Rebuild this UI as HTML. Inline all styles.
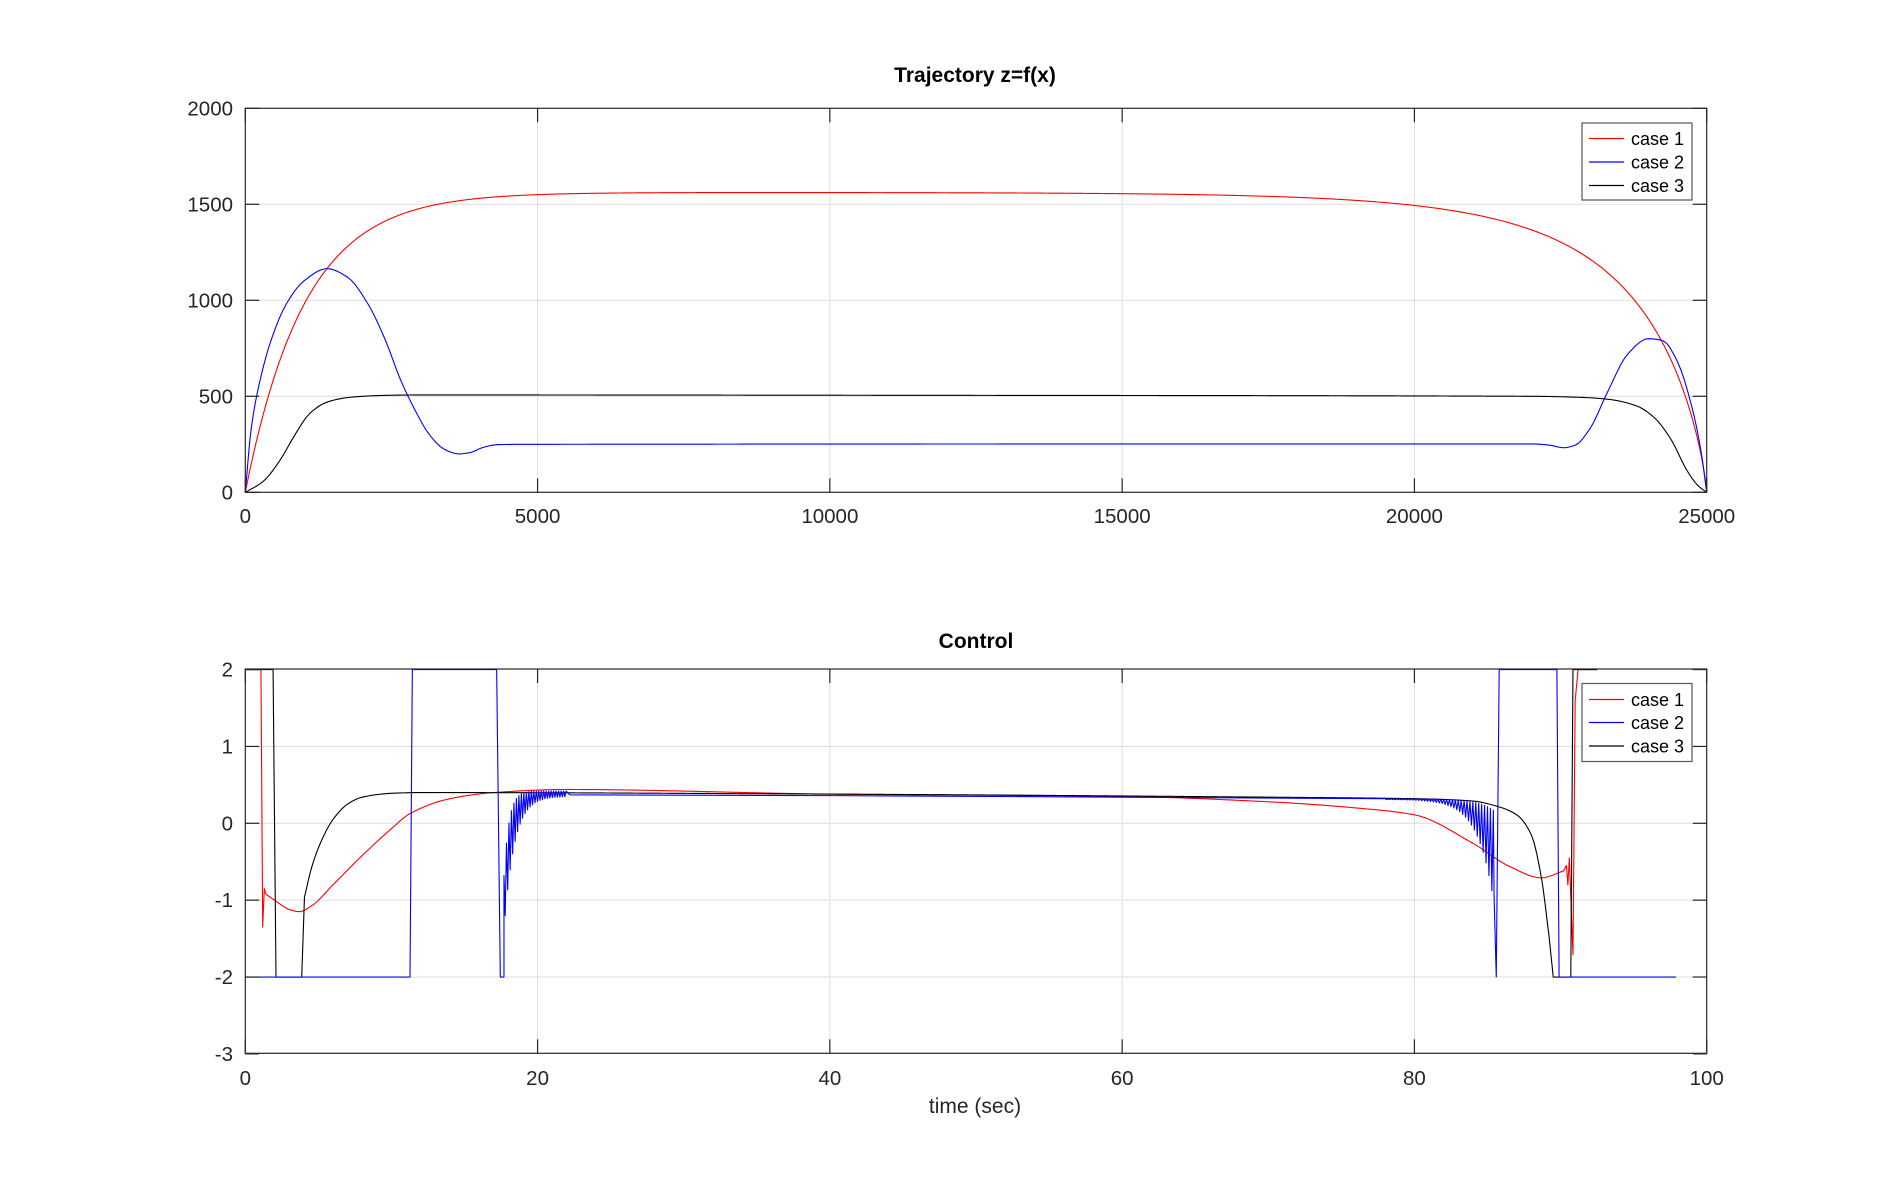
<!DOCTYPE html>
<html><head><meta charset="utf-8"><style>
html,body{margin:0;padding:0;background:#fff;}
svg{display:block;font-family:"Liberation Sans",sans-serif;}
</style></head><body>
<svg id="s" width="1886" height="1183" viewBox="0 0 1886 1183" xmlns="http://www.w3.org/2000/svg">
<rect width="1886" height="1183" fill="#fff"/>
<g id="grid" stroke="#dedede" stroke-width="1"></g>
<g id="curves" fill="none" stroke-width="1.1" stroke-linejoin="round"></g>
<g id="axes" stroke="#262626" stroke-width="1.2" fill="none"></g>
<g id="labels" fill="#262626" font-size="20.5"></g>
<text x="975" y="82" text-anchor="middle" font-size="21" font-weight="bold" fill="#000">Trajectory z=f(x)</text>
<text x="976" y="648" text-anchor="middle" font-size="21" font-weight="bold" fill="#000">Control</text>
<text x="975" y="1113" text-anchor="middle" font-size="21" fill="#262626">time (sec)</text>
<g font-size="18" fill="#000">
<rect x="1582" y="123" width="110" height="77" fill="#fff" stroke="#555" stroke-width="1.2"/>
<line x1="1589" y1="138.5" x2="1624" y2="138.5" stroke="#ff0000" stroke-width="1.2"/>
<line x1="1589" y1="162" x2="1624" y2="162" stroke="#0000ff" stroke-width="1.2"/>
<line x1="1589" y1="185.5" x2="1624" y2="185.5" stroke="#000" stroke-width="1.2"/>
<text x="1631" y="145">case 1</text><text x="1631" y="168.5">case 2</text><text x="1631" y="192">case 3</text>
<rect x="1582" y="683.5" width="110" height="78" fill="#fff" stroke="#555" stroke-width="1.2"/>
<line x1="1589" y1="699.5" x2="1624" y2="699.5" stroke="#ff0000" stroke-width="1.2"/>
<line x1="1589" y1="722.5" x2="1624" y2="722.5" stroke="#0000ff" stroke-width="1.2"/>
<line x1="1589" y1="746" x2="1624" y2="746" stroke="#000" stroke-width="1.2"/>
<text x="1631" y="706">case 1</text><text x="1631" y="729">case 2</text><text x="1631" y="752.5">case 3</text>
</g>
</svg>
<script>
(function(){
var NS="http://www.w3.org/2000/svg";
function el(p,n,a,t){var e=document.createElementNS(NS,n);for(var k in a)e.setAttribute(k,a[k]);if(t!=null)e.textContent=t;document.getElementById(p).appendChild(e);return e;}
var L=245.3,R=1706.7;
var T1=108.3,B1=492.3,T2=669,B2=1053.3;
function X1(x){return L+x*(R-L)/25000;} function Y1(z){return B1-z*(B1-T1)/2000;}
function X2(t){return L+t*(R-L)/100;} function Y2(u){return 823.3-u*(B2-T2)/5;}
for(var i=0;i<=5;i++){var x=X1(i*5000);
 if(i>0&&i<5)el("grid","line",{x1:x,y1:T1,x2:x,y2:B1});
 el("axes","line",{x1:x,y1:B1,x2:x,y2:B1-14});el("axes","line",{x1:x,y1:T1,x2:x,y2:T1+14});
 el("labels","text",{x:x,y:523,"text-anchor":"middle"},String(i*5000));}
for(var i=0;i<=4;i++){var y=Y1(i*500);
 if(i>0&&i<4)el("grid","line",{x1:L,y1:y,x2:R,y2:y});
 el("axes","line",{x1:L,y1:y,x2:L+14,y2:y});el("axes","line",{x1:R,y1:y,x2:R-14,y2:y});
 el("labels","text",{x:233,y:y+7,"text-anchor":"end"},String(i*500));}
el("axes","rect",{x:L,y:T1,width:R-L,height:B1-T1});
for(var i=0;i<=5;i++){var x=X2(i*20);
 if(i>0&&i<5)el("grid","line",{x1:x,y1:T2,x2:x,y2:B2});
 el("axes","line",{x1:x,y1:B2,x2:x,y2:B2-14});el("axes","line",{x1:x,y1:T2,x2:x,y2:T2+14});
 el("labels","text",{x:x,y:1085,"text-anchor":"middle"},String(i*20));}
for(var v=-3;v<=2;v++){var y=Y2(v);
 if(v>-3&&v<2)el("grid","line",{x1:L,y1:y,x2:R,y2:y});
 el("axes","line",{x1:L,y1:y,x2:L+14,y2:y});el("axes","line",{x1:R,y1:y,x2:R-14,y2:y});
 el("labels","text",{x:233,y:y+7,"text-anchor":"end"},String(v));}
el("axes","rect",{x:L,y:T2,width:R-L,height:B2-T2});

// monotone cubic (Fritsch-Carlson) interpolation in x
function mc(p){
 var n=p.length,d=[],m=[];
 for(var i=0;i<n-1;i++)d.push((p[i+1][1]-p[i][1])/(p[i+1][0]-p[i][0]));
 m[0]=d[0];m[n-1]=d[n-2];
 for(var i=1;i<n-1;i++){if(d[i-1]*d[i]<=0)m[i]=0;else{var h0=p[i][0]-p[i-1][0],h1=p[i+1][0]-p[i][0];var w1=2*h1+h0,w2=h1+2*h0;m[i]=(w1+w2)/(w1/d[i-1]+w2/d[i]);}}
 var o=[];
 for(var i=0;i<n-1;i++){var h=p[i+1][0]-p[i][0];
  var N=Math.max(4,Math.ceil(h/(p[n-1][0]-p[0][0])*400));
  for(var s=0;s<N;s++){var t=s/N,t2=t*t,t3=t2*t;
   var y=(2*t3-3*t2+1)*p[i][1]+(t3-2*t2+t)*h*m[i]+(-2*t3+3*t2)*p[i+1][1]+(t3-t2)*h*m[i+1];
   o.push([p[i][0]+t*h,y]);}}
 o.push(p[n-1]);return o;}
function path(pts,c){var d="M"+pts.map(function(q){return q[0].toFixed(2)+","+q[1].toFixed(2);}).join("L");el("curves","path",{d:d,stroke:c});}
function m1(p){return p.map(function(q){return [X1(q[0]),Y1(q[1])];});}
function m2(p){return p.map(function(q){return [X2(q[0]),Y2(q[1])];});}

var r=[];for(var i=0;i<=1000;i++){var x=25000*i/1000,dd=25000-x;
 r.push([x,1562*(1-Math.exp(-x/1020))*(1-Math.exp(-Math.pow(dd/1200,0.8)))]);}
path(m1(r),"#ff0000");
var b=mc([[0,0],[100,330],[250,580],[450,800],[700,980],[1000,1100],[1400,1165],[1750,1120],[2100,980],[2400,790],[2650,590],[2900,430],[3150,300],[3400,225],[3650,200],[3850,207],[4050,232],[4300,248],[4800,250],[22000,252],[22300,246],[22550,232],[22750,245],[23000,330],[23300,520],[23650,720],[24000,800],[24250,790],[24500,680],[24750,440],[24900,220],[25000,0]]);
path(m1(b),"#0000ff");
var k=mc([[0,0],[300,55],[600,170],[850,300],[1100,410],[1400,470],[1800,495],[2400,505],[3000,507],[12000,505],[22000,500],[22800,495],[23300,485],[23800,450],[24100,390],[24400,270],[24650,120],[24850,35],[25000,0]]);
path(m1(k),"#000");

var rr=[[0,2],[1.07,2],[1.19,-1.35],[1.3,-0.85]].concat(mc([[1.4,-0.92],[2,-1.0],[3,-1.12],[3.7,-1.15],[4.5,-1.08],[6,-0.8],[8,-0.42],[10,-0.07],[11.3,0.13],[14,0.32],[17,0.4],[22,0.44],[40,0.38],[60,0.35],[70,0.28],[76,0.2],[80,0.11],[84,-0.26],[86.5,-0.56],[88.7,-0.71],[90.2,-0.62]]))
 .concat([[90.4,-0.55],[90.5,-0.8],[90.6,-0.45],[90.7,-0.95],[90.85,-1.71],[91.0,1.6],[91.2,2],[92.5,2]]);
path(m2(rr),"#ff0000");
var kk=[[0,2],[1.9,2],[2.1,-2],[3.86,-2],[4.05,-0.95]].concat(mc([[4.1,-0.92],[4.5,-0.6],[5,-0.32],[6,0.05],[7,0.25],[8,0.34],[10,0.39],[12,0.4],[40,0.38],[70,0.34],[80,0.32],[84,0.29],[85.5,0.23],[87,0.11],[88,-0.15],[88.7,-0.72],[89.2,-1.45]]))
 .concat([[89.5,-2],[90.7,-2],[90.85,2],[92.5,2]]);
path(m2(kk),"#000");
var bb=[[0,-2],[11.27,-2],[11.43,2],[17.2,2],[17.45,-2],[17.7,-2]];
var t=17.7,up=true;
while(t<22){var hi=0.42-1.1*Math.exp(-(t-17.7)/0.35),lo=0.35-1.75*Math.exp(-(t-17.7)/0.7);
 bb.push([t,up?hi:lo]);up=!up;t+=0.085;}
bb=bb.concat([[22.2,0.37],[40,0.36],[60,0.34],[78,0.32]]);
t=78;up=true;
while(t<85.4){var a=Math.exp((t-85.4)/1.1);var hi=0.32-0.15*a,lo=0.31-1.3*a;
 bb.push([t,up?hi:lo]);up=!up;t+=0.1;}
bb=bb.concat([[85.45,-0.95],[85.6,-2],[85.8,2],[89.75,2],[89.9,-2],[97.9,-2]]);
path(m2(bb),"#0000ff");
})();
</script>
</body></html>
